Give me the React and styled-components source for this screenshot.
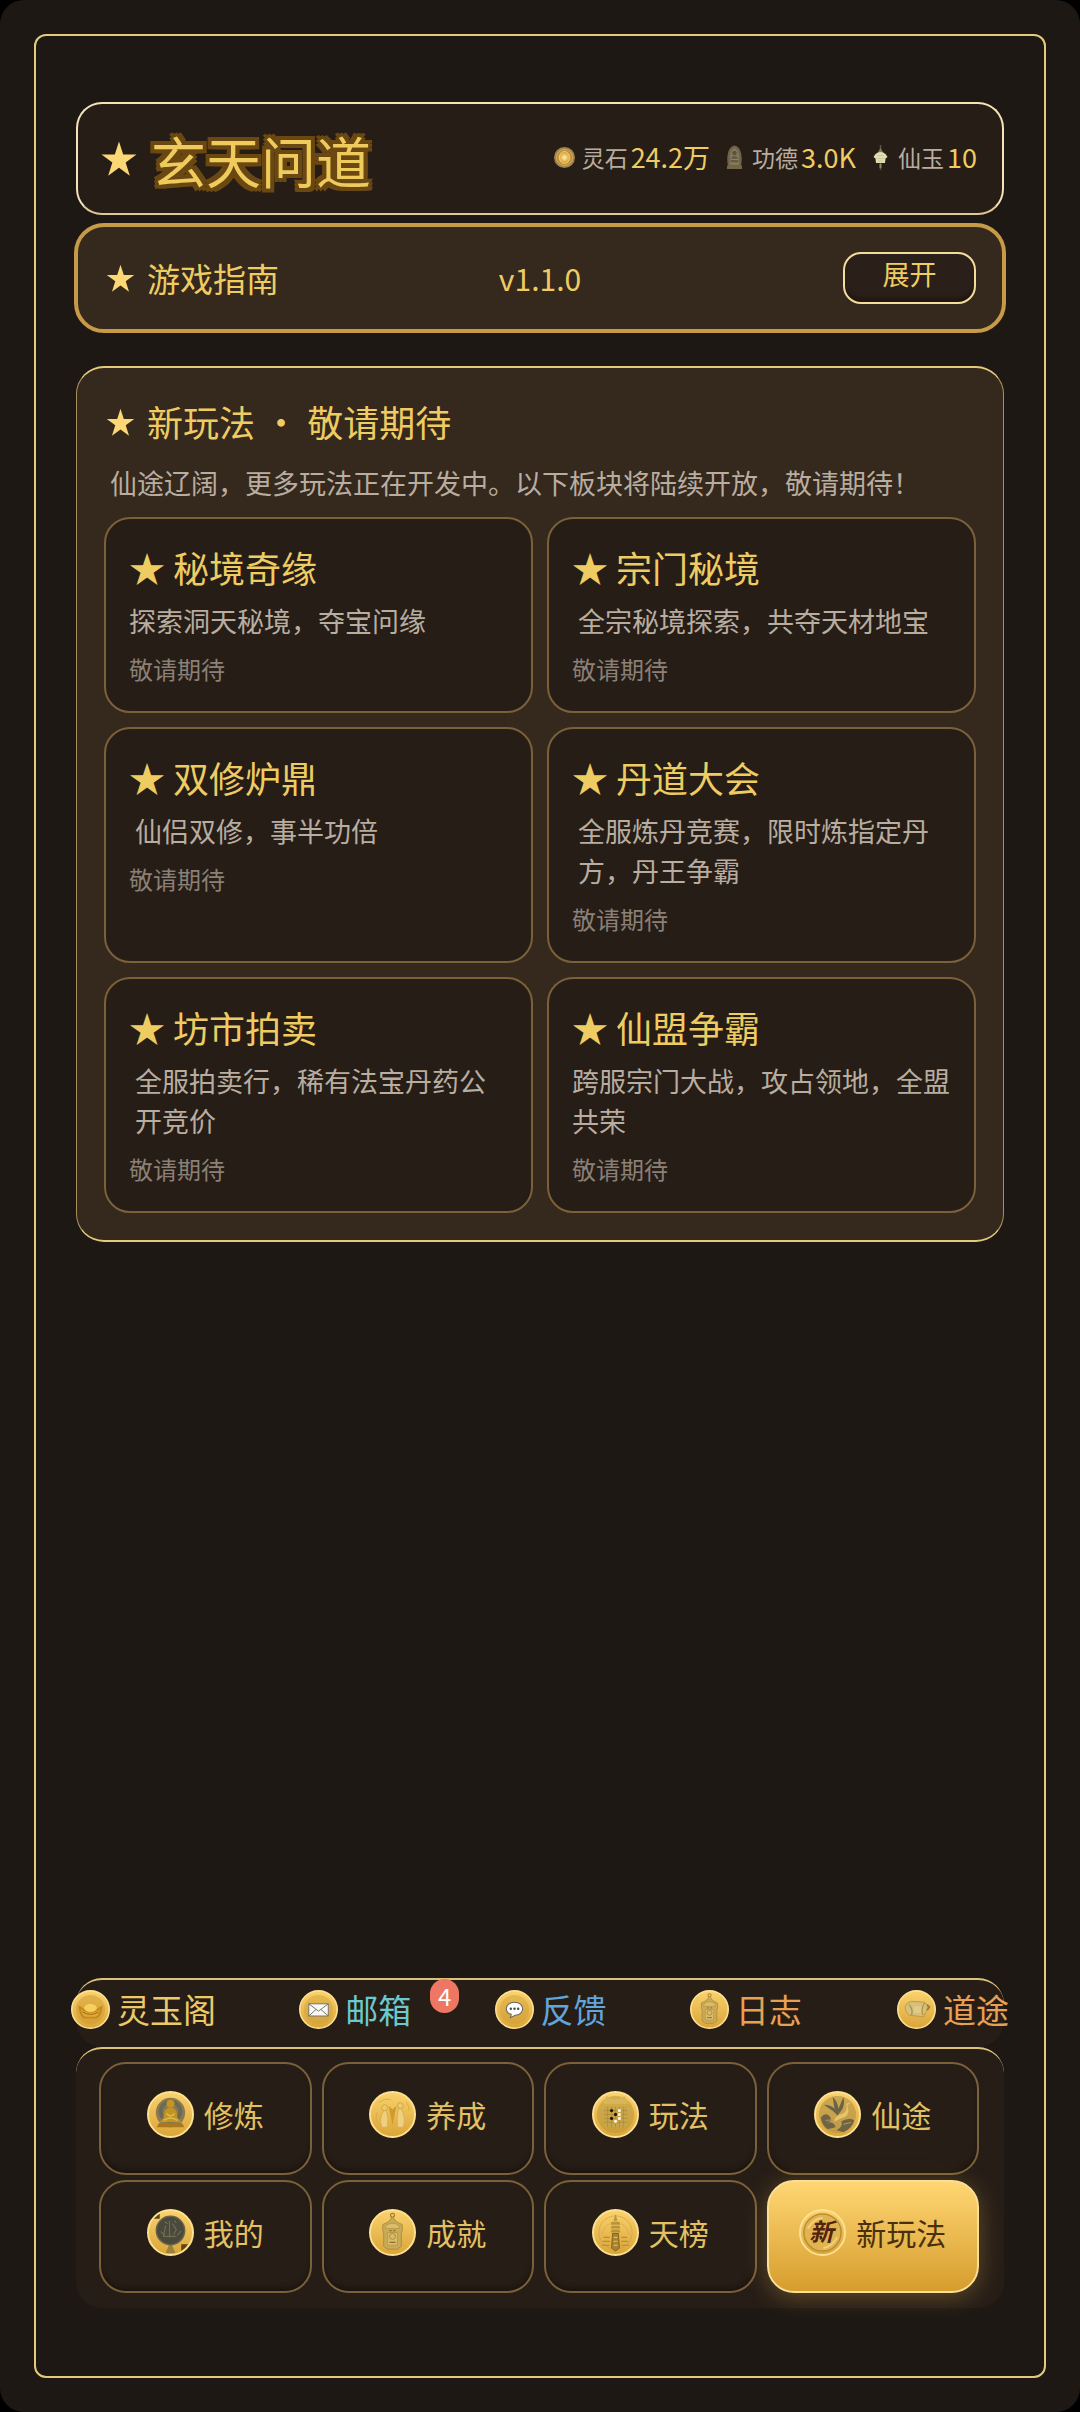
import React, { useId } from "react";
import styled, { createGlobalStyle, css } from "styled-components";

const color = {
  page: "#1d1814",
  surface: "#261d17",
  panel: "#35281d",
  gold: "#efcc62",
  frame: "#e4cb7c",
  rim: "#dcc27a",
  line: "#7b6139",
  text: "#b9ada0",
  faint: "#8b8075",
};

const GlobalStyle = createGlobalStyle`
  *, *::before, *::after { box-sizing: border-box; }
  body {
    margin: 0;
    background: #000;
    color: ${color.gold};
    font-family: "Noto Sans CJK SC", "Noto Sans", sans-serif;
  }
  h1, h2, h3, p { margin: 0; font-weight: 400; }
  button { font: inherit; color: inherit; cursor: pointer; margin: 0; }
`;

const Shell = styled.div`
  min-height: 100vh;
  padding: 34px;
  display: flex;
  border-radius: 24px;
  background: ${color.page};
`;

const Frame = styled.div`
  flex: 1;
  min-width: 0;
  display: flex;
  flex-direction: column;
  padding: 66px 40px 68px;
  border: 2px solid ${color.frame};
  border-radius: 12px;
`;

const Header = styled.header`
  display: flex;
  align-items: center;
  justify-content: space-between;
  height: 113px;
  padding: 0 25px 0 20px;
  border: 2px solid #f5e3b8;
  border-bottom-color: #e0c795;
  border-radius: 26px;
  background: ${color.surface};
`;

const Brand = styled.div`
  display: flex;
  align-items: center;
  gap: 11px;
`;

const BrandName = styled.h1`
  font-size: 55px;
  line-height: 72px;
  color: #efcb5e;
  text-shadow:
    -2px -2px 0 #6b4812, 2px -2px 0 #6b4812, -2px 2px 0 #6b4812, 2px 2px 0 #6b4812,
    -4px 0 0 #6b4812, 4px 0 0 #6b4812, 0 -4px 0 #6b4812, 0 4px 0 #6b4812,
    -4px -4px 0 #6b4812, 4px -4px 0 #6b4812, -4px 4px 0 #6b4812, 4px 4px 0 #6b4812;
`;

const Stats = styled.div`
  display: flex;
  align-items: center;
  gap: 12px;
  padding-bottom: 3px;
`;

const Stat = styled.div`
  display: flex;
  align-items: center;
  gap: 5px;
  line-height: 40px;
`;

const StatText = styled.div`
  display: flex;
  align-items: center;
  gap: 3px;
`;

const StatLabel = styled.span`
  font-size: 23px;
  color: ${color.text};
`;

const StatValue = styled.span`
  font-size: 27px;
  color: ${color.gold};
`;

const Guide = styled.section`
  display: grid;
  grid-template-columns: 1fr auto 1fr;
  align-items: center;
  margin: 8px -2px 0;
  padding: 25px 26px;
  border: 4px solid #c79a48;
  border-radius: 30px;
  background: ${color.panel};
`;

const Heading = styled.div`
  display: flex;
  align-items: center;
  gap: 10px;
`;

const GuideTitle = styled.h2`
  font-size: 33px;
  line-height: 48px;
`;

const Version = styled.span`
  font-size: 30px;
  line-height: 48px;
`;

const ExpandButton = styled.button`
  justify-self: end;
  width: 133px;
  height: 52px;
  padding: 0 0 8px;
  border: 2px solid #f3dc9c;
  border-radius: 18px;
  background: #2b2019;
  box-shadow: inset 0 -6px 4px -2px #1f160f;
  font-size: 27px;
  line-height: 40px;
  color: ${color.gold};
`;

const Panel = styled.main`
  display: flex;
  flex-direction: column;
  gap: 14px;
  margin-top: 33px;
  padding: 27px;
  border: solid;
  border-width: 2px 1px;
  border-color: ${color.frame} #aa8f58;
  border-radius: 28px;
  background: ${color.panel};
`;

const PanelTitle = styled.h2`
  font-size: 36px;
  line-height: 52px;
  padding-bottom: 2px;
`;

const Intro = styled.p`
  padding-left: 6px;
  font-size: 27px;
  line-height: 40px;
  color: ${color.text};
`;

const CardGrid = styled.div`
  display: grid;
  grid-template-columns: 1fr 1fr;
  gap: 14px;
`;

const Card = styled.article`
  padding: 22px 23px 24px;
  border: 2px solid ${color.line};
  border-radius: 26px;
  background: ${color.surface};
`;

const CardTitle = styled.h3`
  font-size: 36px;
  line-height: 52px;
`;

const CardText = styled.p`
  margin-top: 8px;
  padding-left: ${(p) => (p.$indented ? "6px" : "0")};
  font-size: 27px;
  line-height: 40px;
  color: ${color.text};
`;

const CardStatus = styled.p`
  margin-top: 10px;
  font-size: 24px;
  line-height: 36px;
  color: ${color.faint};
`;

const Footer = styled.footer`
  margin-top: auto;
`;

const bar = css`
  border-top: 2px solid ${color.rim};
  border-radius: 26px;
  background: ${color.surface};
`;

const Toolbar = styled.nav`
  ${bar}
  height: 69px;
  padding-top: 5px;
`;

const ToolList = styled.div`
  display: flex;
  justify-content: space-between;
  margin: 0 -5px;
`;

const Tool = styled.button`
  position: relative;
  display: flex;
  align-items: center;
  gap: 7px;
  padding: 0 ${(p) => (p.$spaced ? "12px" : "0")} 0 0;
  border: 0;
  background: none;
  font-size: 33px;
  line-height: 48px;
  white-space: nowrap;
  color: ${(p) => p.$tint};
`;

const Badge = styled.span`
  position: absolute;
  left: 131px;
  top: -6px;
  width: 29px;
  height: 34px;
  border-radius: 15px;
  background: #ee7763;
  color: #fff;
  font-size: 24px;
  line-height: 33px;
  text-align: center;
`;

const TabBar = styled.nav`
  ${bar}
  display: grid;
  grid-template-columns: repeat(4, 1fr);
  gap: 5px 10px;
  padding: 13px 25px 15px 23px;
`;

const Tab = styled.button`
  display: flex;
  align-items: center;
  justify-content: center;
  gap: 10px;
  height: 113px;
  padding: 0 0 8px;
  border: 2px solid ${color.line};
  border-radius: 27px;
  background: ${color.surface};
  box-shadow: inset 0 -5px 5px -2px #1b130d;
  font-size: 30px;
  line-height: 42px;
  color: #e3c162;
  ${(p) =>
    p.$active &&
    css`
      border-color: #fbdf94;
      background: linear-gradient(#ffd673, #d69d2d);
      box-shadow: 0 4px 24px rgba(240, 190, 80, 0.3);
      color: #4a300c;
    `}
`;

const TabName = styled.span`
  padding-bottom: 2px;
`;

const Svg = styled.svg`
  display: block;
  flex: none;
`;

function Star({ size }) {
  return (
    <Svg width={size} height={size} viewBox="0 0 24 24" aria-hidden="true">
      <path
        fill="#fbd775"
        d="M12 2l2.4 7.4H22l-6.2 4.6 2.4 7.6L12 17l-6.2 4.6L8.2 14 2 9.4h7.6z"
      />
    </Svg>
  );
}

function StoneIcon() {
  const id = useId();
  return (
    <Svg width="25" height="25" viewBox="0 0 25 25" aria-hidden="true">
      <defs>
        <radialGradient id={id}>
          <stop offset="0" stopColor="#fff3b8" />
          <stop offset="0.35" stopColor="#e8b74e" />
          <stop offset="0.7" stopColor="#b18436" />
          <stop offset="1" stopColor="#9c8455" />
        </radialGradient>
      </defs>
      <circle cx="12.5" cy="12.5" r="10.5" fill={`url(#${id})`} />
      <circle cx="12.5" cy="12.5" r="8" fill="none" stroke="#d9b065" strokeWidth="1" />
      <ellipse cx="12.5" cy="12.5" rx="5" ry="6" fill="none" stroke="#f4d27c" strokeWidth="1" />
    </Svg>
  );
}

function VirtueIcon() {
  return (
    <Svg width="25" height="25" viewBox="0 0 25 25" aria-hidden="true">
      <path d="M6 21C4 12 6 1 12.5 0.5 19 1 21 12 19 21z" fill="#6d634c" />
      <path d="M8 20C7 12 8 4 12.5 3c4.5 1 5.5 9 4.5 17z" fill="#837759" />
      <circle cx="12.5" cy="8" r="2.2" fill="#5b523d" />
      <path d="M8.5 18c0-6 2-7 4-7s4 1 4 7z" fill="#665b44" />
      <path d="M5 20.5h15V24H5z" fill="#736747" />
      <path d="M9 14.5h7M8 18h9" stroke="#8f8260" />
    </Svg>
  );
}

function JadeIcon() {
  return (
    <Svg width="25" height="25" viewBox="0 0 25 25" aria-hidden="true">
      <path d="M12.5 0v25" stroke="#5d5542" strokeWidth="1.5" />
      <path d="M12.5 3l3 5h-6z" fill="#817a5e" />
      <path d="M7.5 9q5-4 10 0l2 3-2 1.5-0.5 4.5H8l-0.5-4.5-2-1.5z" fill="#e3ddb2" />
      <path d="M9 10.5h7M8.5 13.5h8M10 16h5" stroke="#cdc69a" />
      <path d="M12.5 19v4" stroke="#8c8360" strokeWidth="2" />
    </Svg>
  );
}

const art = {
  ingot: (
    <>
      <circle cx="24" cy="24" r="18" fill="#c9952f" opacity="0.45" />
      <path d="M9 19q4 1 6 4 2-6 9-6t9 6q2-3 6-4-1 13-7 16H16Q10 32 9 19z" fill="#c58a1d" />
      <ellipse cx="24" cy="22" rx="8" ry="5" fill="#f6cf5c" />
      <path d="M12 24q12 8 24 0-2 8-6 9H18q-4-1-6-9z" fill="#e0a935" />
      <path d="M14 27q10 6 20 0" stroke="#8d5f12" fill="none" />
    </>
  ),
  mail: (
    <>
      <circle cx="24" cy="24" r="18" fill="#cb9a35" opacity="0.4" />
      <path d="M12 17h24v15H12z" fill="#fbfbf6" stroke="#73706a" strokeWidth="1.2" />
      <path d="M12 17l12 9 12-9M12 32l9-8M36 32l-9-8" fill="none" stroke="#73706a" strokeWidth="1.2" />
    </>
  ),
  chat: (
    <>
      <circle cx="24" cy="24" r="18" fill="#cb9a35" opacity="0.4" />
      <path d="M24 15c6 0 10 3.5 10 8s-4 8-9 8l-6 3 1-4c-4-1-6-4-6-7 0-4.5 4-8 10-8z" fill="#fff" stroke="#6b6660" strokeWidth="1.3" />
      <circle cx="19.5" cy="23" r="1.5" fill="#4c4945" />
      <circle cx="24" cy="23" r="1.5" fill="#4c4945" />
      <circle cx="28.5" cy="23" r="1.5" fill="#4c4945" />
    </>
  ),
  token: (
    <>
      <circle cx="24" cy="6.5" r="2" fill="none" stroke="#9b7c35" strokeWidth="1.2" />
      <path d="M24 8l4 5 6 3v6l-1 3v13l-4 3H19l-4-3V25l-1-3v-6l6-3z" fill="#cbaa55" stroke="#a38440" strokeWidth="0.8" />
      <path d="M17 17q7-5 14 0v3H17zM19 24h10v13H19z" fill="#dbbd69" stroke="#b39449" strokeWidth="0.8" />
      <circle cx="24" cy="28" r="3" fill="none" stroke="#a5863d" />
      <path d="M21 22h2m2 0h2M21 34h6" stroke="#8a6c2c" strokeWidth="1.2" />
    </>
  ),
  scroll: (
    <>
      <path d="M10 20q2-5 8-6l16 1q5 4 3 9l-4 9-18-2q-5-4-5-11z" fill="#d8c07a" stroke="#b4934a" />
      <path d="M15 18q5 6 3 13" fill="none" stroke="#8c9a62" strokeWidth="1.5" />
      <path d="M21 20h9l-1 8h-8z" fill="#e3cb85" />
      <path d="M34 16q-5 7-2 15" fill="none" stroke="#b48f42" strokeWidth="1.5" />
      <path d="M37 18l3 3-3 4" fill="none" stroke="#a07a30" strokeWidth="2" />
    </>
  ),
  buddha: (
    <>
      <circle cx="24" cy="22" r="15" fill="#8c7a50" />
      <circle cx="24" cy="21" r="10" fill="none" stroke="#6b6a56" strokeWidth="4" />
      <circle cx="24" cy="13" r="4" fill="#c6941f" />
      <path d="M24 17c5 0 7 4 7 10l4 5H13l4-5c0-6 2-10 7-10z" fill="#c29424" />
      <path d="M20 23q4 5 8 0M17 30q7-5 14 0" fill="none" stroke="#e5bc4a" strokeWidth="1.5" />
      <path d="M12 33h24l2 4H10z" fill="#a87720" />
    </>
  ),
  growth: (
    <>
      <path d="M15 20q-5 8-2 17h6q1-9-1-17zM33 18q5 9 2 19h-6q-1-10 1-19z" fill="#efd080" stroke="#d8ae54" />
      <circle cx="16" cy="17" r="3" fill="#ecca70" stroke="#d0a348" />
      <circle cx="32" cy="15" r="3" fill="#ecca70" stroke="#d0a348" />
      <path d="M20 15l4 20 4-20-4 4z" fill="#d19a2d" />
      <path d="M8 22q-2 6 1 11M10 12q6-5 12-3M38 11q3 4 3 9" fill="none" stroke="#d8ac4e" />
    </>
  ),
  board: (
    <>
      <circle cx="24" cy="24" r="19" fill="#b99438" opacity="0.55" />
      <path d="M15 5q9 7 18 0l4 8H11z" fill="#d8b75c" />
      <path d="M12 16h24v21H12z" fill="#c8a547" />
      <path d="M12 20h24M12 24h24M12 28h24M12 32h24M16 16v21M20 16v21M24 16v21M28 16v21M32 16v21" stroke="#a5863a" strokeWidth="0.6" />
      <g fill="#23190c">
        <circle cx="20" cy="20" r="1.7" />
        <circle cx="24" cy="24" r="1.7" />
        <circle cx="20" cy="28" r="1.7" />
      </g>
      <g fill="#fff8df">
        <circle cx="28" cy="20" r="1.6" />
        <circle cx="28" cy="24" r="1.6" />
        <circle cx="28" cy="28" r="1.6" />
        <circle cx="24" cy="31" r="1.6" />
      </g>
    </>
  ),
  crane: (
    <>
      <circle cx="24" cy="24" r="19" fill="#b89748" opacity="0.7" />
      <path d="M20 21L10 14q7 0 11 4L19 6q5 4 6 12l5-12q2 8-2 14l-4 5z" fill="#6b6347" />
      <path d="M27 24q8-2 6-11l5-2-4 4q4 11-7 13l-7 4q1-6 7-8z" fill="#e5c46a" />
      <path d="M7 27q5-6 9-1t-3 6q8-1 9 5l-8 2q-6-4-7-12zM28 31q9-5 13-1-2 8-11 12l-7-2q7-3 5-9z" fill="#6f6546" />
      <path d="M12 30q10-2 14 6M30 34l8-2" fill="none" stroke="#b49a57" />
    </>
  ),
  mirror: (
    <>
      <path d="M6 10q3-5 7-7v7zM35 36h7q-3 5-7 7z" fill="#5c4519" />
      <path d="M21 34h6l-1 4 3 7H19l3-7z" fill="#9b8140" />
      <circle cx="24" cy="22" r="14.5" fill="#4a4a3c" stroke="#6a6347" strokeWidth="1.5" />
      <path d="M23 12v17M19 17l-2 11h13M26 15l4 6-3 5M14 23l4 4M31 27l4-5M18 13l3 2M28 12l2 2" fill="none" stroke="#716b50" strokeWidth="1.2" />
    </>
  ),
  tower: (
    <>
      <circle cx="24" cy="24" r="17" fill="none" stroke="#c79c42" opacity="0.6" />
      <path d="M24 5l2 7h-4zM20 13h8l1 3h-10zM20 17h8l1 3h-10zM20 21h8l1 3h-10z" fill="#b8933c" />
      <path d="M21 25h6l1 15-4 3-4-3z" fill="#a8822c" stroke="#84641d" />
      <path d="M22 29h4m-4 4h4m-4 4h4" stroke="#edcb66" />
      <path d="M12 29h6m-7 4h7m-8 4h8M30 29h6m-6 4h7m-7 4h8" stroke="#b18d3f" strokeWidth="1.2" />
      <path d="M10 26q2-8 8-11M38 26q-2-8-8-11" stroke="#d6ae55" fill="none" />
    </>
  ),
  fresh: (
    <>
      <circle cx="24" cy="24" r="19" fill="#e2b450" stroke="#bb8c33" strokeWidth="1.5" />
      <path d="M9 20q6-10 15-11M39 29q-5 9-14 11" fill="none" stroke="#f2d27c" strokeWidth="2" />
      <text
        x="23"
        y="33"
        textAnchor="middle"
        fontFamily="'Noto Sans CJK SC', sans-serif"
        fontSize="25"
        fontWeight="700"
        fontStyle="italic"
        fill="#52230d"
      >
        新
      </text>
    </>
  ),
};

function Coin({ kind, size }) {
  const id = useId();
  return (
    <Svg width={size} height={size} viewBox="0 0 48 48" aria-hidden="true">
      <defs>
        <linearGradient id={id} x1="0" y1="0" x2="0" y2="1">
          <stop offset="0" stopColor="#fbd26c" />
          <stop offset="1" stopColor="#d9a538" />
        </linearGradient>
      </defs>
      <circle cx="24" cy="24" r="23" fill={`url(#${id})`} />
      {art[kind]}
      <circle cx="24" cy="24" r="23" fill="none" stroke="#fde092" strokeWidth="2" />
    </Svg>
  );
}

const stats = [
  { label: "灵石", value: "24.2万", Icon: StoneIcon },
  { label: "功德", value: "3.0K", Icon: VirtueIcon },
  { label: "仙玉", value: "10", Icon: JadeIcon },
];

const features = [
  { name: "秘境奇缘", text: "探索洞天秘境，夺宝问缘" },
  { name: "宗门秘境", text: "全宗秘境探索，共夺天材地宝", indented: true },
  { name: "双修炉鼎", text: "仙侣双修，事半功倍", indented: true },
  { name: "丹道大会", text: "全服炼丹竞赛，限时炼指定丹方，丹王争霸", indented: true },
  { name: "坊市拍卖", text: "全服拍卖行，稀有法宝丹药公开竞价", indented: true },
  { name: "仙盟争霸", text: "跨服宗门大战，攻占领地，全盟共荣" },
];

const tools = [
  { name: "灵玉阁", kind: "ingot", tint: "#ecca68" },
  { name: "邮箱", kind: "mail", tint: "#6cc8cf", badge: 4 },
  { name: "反馈", kind: "chat", tint: "#62a5dc" },
  { name: "日志", kind: "token", tint: "#e9a053", spaced: true },
  { name: "道途", kind: "scroll", tint: "#e9a053" },
];

const tabs = [
  { name: "修炼", kind: "buddha" },
  { name: "养成", kind: "growth" },
  { name: "玩法", kind: "board" },
  { name: "仙途", kind: "crane" },
  { name: "我的", kind: "mirror" },
  { name: "成就", kind: "token" },
  { name: "天榜", kind: "tower" },
  { name: "新玩法", kind: "fresh", active: true },
];

export default function App() {
  return (
    <>
      <GlobalStyle />
      <Shell>
        <Frame>
          <Header>
            <Brand>
              <Star size={42} />
              <BrandName>玄天问道</BrandName>
            </Brand>
            <Stats>
              {stats.map(({ label, value, Icon }) => (
                <Stat key={label}>
                  <Icon />
                  <StatText>
                    <StatLabel>{label}</StatLabel>
                    <StatValue>{value}</StatValue>
                  </StatText>
                </Stat>
              ))}
            </Stats>
          </Header>

          <Guide>
            <Heading>
              <Star size={33} />
              <GuideTitle>游戏指南</GuideTitle>
            </Heading>
            <Version>v1.1.0</Version>
            <ExpandButton type="button">展开</ExpandButton>
          </Guide>

          <Panel>
            <Heading>
              <Star size={33} />
              <PanelTitle>新玩法 · 敬请期待</PanelTitle>
            </Heading>
            <Intro>仙途辽阔，更多玩法正在开发中。以下板块将陆续开放，敬请期待！</Intro>
            <CardGrid>
              {features.map((f) => (
                <Card key={f.name}>
                  <CardTitle>★ {f.name}</CardTitle>
                  <CardText $indented={f.indented}>{f.text}</CardText>
                  <CardStatus>敬请期待</CardStatus>
                </Card>
              ))}
            </CardGrid>
          </Panel>

          <Footer>
            <Toolbar>
              <ToolList>
                {tools.map((t) => (
                  <Tool key={t.name} type="button" $tint={t.tint} $spaced={t.spaced}>
                    <Coin kind={t.kind} size={39} />
                    <span>{t.name}</span>
                    {t.badge && <Badge>{t.badge}</Badge>}
                  </Tool>
                ))}
              </ToolList>
            </Toolbar>
            <TabBar>
              {tabs.map((t) => (
                <Tab key={t.name} type="button" $active={t.active}>
                  <Coin kind={t.kind} size={47} />
                  <TabName>{t.name}</TabName>
                </Tab>
              ))}
            </TabBar>
          </Footer>
        </Frame>
      </Shell>
    </>
  );
}
